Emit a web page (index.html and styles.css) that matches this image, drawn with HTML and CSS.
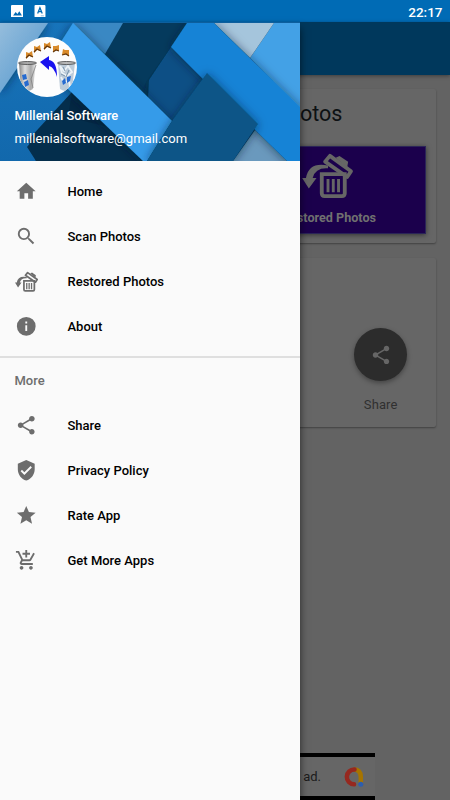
FILE: index.html
```html
<!DOCTYPE html>
<html lang="en">
<head>
<meta charset="utf-8">
<title>Millenial Software</title>
<link rel="stylesheet" href="styles.css">
</head>
<body>
<svg width="0" height="0" class="defs">
  <symbol id="restore" viewBox="0 0 54 48">
    <path d="M20.500 22h24v20q0 3-3 3h-18q-3 0-3-3z" fill="none" stroke="currentColor" stroke-width="4"/>
    <path d="M27 27v14M32.500 27v14M38 27v14" stroke="currentColor" stroke-width="3"/>
    <path d="M29 3l22 16-4 6L24 9z" fill="none" stroke="currentColor" stroke-width="4" stroke-linejoin="round"/>
    <path d="M35 5l4-2 9 6-1 6z" fill="currentColor"/>
    <path d="M27 13Q7 9 4 26H0l7 11 8-11h-4q3-11 16-10z" fill="currentColor"/>
  </symbol>
  <symbol id="share" viewBox="0 0 24 24">
    <path fill="currentColor" d="M18 16.080c-.76 0-1.440.3-1.960.77L8.910 12.700c.05-.23.09-.46.09-.7s-.04-.47-.09-.7l7.050-4.110c.54.5 1.250.81 2.040.81 1.660 0 3-1.340 3-3s-1.340-3-3-3-3 1.340-3 3c0 .24.04.47.09.7L8.040 9.810C7.500 9.310 6.790 9 6 9c-1.660 0-3 1.340-3 3s1.340 3 3 3c.79 0 1.500-.31 2.040-.81l7.120 4.160c-.05.21-.08.43-.08.65 0 1.610 1.310 2.920 2.920 2.920s2.920-1.310 2.920-2.920-1.310-2.920-2.920-2.920z"/>
  </symbol>
</svg>
<div class="phone">
  <header class="status">
    <svg class="st" viewBox="0 0 12 12"><rect width="12" height="12" rx="1" fill="#fff"/><path d="M2 10l2.500-3.200 1.600 1.800L8 6l2.500 4z" fill="#006bb5"/></svg>
    <svg class="st" viewBox="0 0 12 12"><rect x=".5" width="10.500" height="12" rx="1" fill="#fff"/><path d="M3.500 8.200L5.700 2.600 7.900 8.200M4.300 6.400h2.800" fill="none" stroke="#006bb5" stroke-width="1.200"/><path d="M6.500 10.400h3" stroke="#7fb3da" stroke-width=".8"/></svg>
    <span class="clock">22:17</span>
  </header>
  <div class="toolbar"></div>
  <main class="content">
    <section class="card photos">
      <h2>Photos</h2>
      <div class="tile"><svg class="tile-icon"><use href="#restore"/></svg><span>Restored Photos</span></div>
    </section>
    <section class="card actions">
      <div class="fab"><svg><use href="#share"/></svg></div>
      <span>Share</span>
    </section>
  </main>
  <footer class="ad">
    <span>ad.</span>
    <svg viewBox="0 0 20 20"><path d="M10 2.500Q17.300 2.500 17.300 10V16" fill="none" stroke="#a67400" stroke-width="4.500"/><path d="M11 2.500A7.300 7.300 0 0 0 10.500 17.300" fill="none" stroke="#96281f" stroke-width="4.500" stroke-linecap="round"/><circle cx="17.300" cy="17.300" r="2.500" fill="#2d5eaf"/></svg>
  </footer>

  <aside class="drawer">
    <div class="banner">
      <svg class="art" viewBox="0 0 300 138" preserveAspectRatio="none">
        <defs>
          <filter id="sh" x="-20%" y="-20%" width="140%" height="140%"><feDropShadow dx="0" dy="1" stdDeviation="5" flood-color="#001b33" flood-opacity=".6"/></filter>
          <linearGradient id="pale" x1="0" y1="0" x2="1" y2="1"><stop offset="0" stop-color="#95bddc"/><stop offset="1" stop-color="#4d94cd"/></linearGradient>
          <linearGradient id="mid" x1="0" y1="0" x2="0" y2="1"><stop offset="0" stop-color="#1774bb"/><stop offset="1" stop-color="#1268ac"/></linearGradient>
        </defs>
        <rect width="300" height="138" fill="#042f4e"/>
        <path d="M123 0h70l-43 76-46-45z" fill="#053a5d"/>
        <path d="M171 24l34 32-33 43-24-23 1-19z" fill="#0a5085" filter="url(#sh)"/>
        <path d="M123 0h66l-18 24-23 32-7 12-36-37z" fill="#053a5d"/>
        <path d="M70 0h53l-18 31z" fill="#3a88c3"/>
        <path d="M0 0h73L60 58l12 11-45 55 9 14H0z" fill="url(#mid)"/>
        <path d="M0 0h48L0 70z" fill="url(#pale)" filter="url(#sh)"/>
        <path d="M28 117l44-48 71 69H36z" fill="#042e4c"/>
        <path d="M72 69l36 35-40-10z" fill="#021f36" opacity=".4"/>
        <path d="M73 0l99 98-25 40h-4L45 44z" fill="#359be9" filter="url(#sh)"/>
        <path d="M274 0h26v86l-50-51z" fill="#43a1e6"/>
        <path d="M214 0h60l-24 35z" fill="#a5c5dc"/>
        <path d="M255 107l32 31h-54z" fill="#6a99bd"/>
        <path d="M187 0h27l86 84v54h-13l-84-82-32-32z" fill="#1583d6" filter="url(#sh)"/>
        <path d="M207 50l51 51-25 37h-86l25-40z" fill="#095487" filter="url(#sh)"/>
      </svg>
      <div class="who">
        <svg class="avatar" viewBox="0 0 60 60">
          <defs><clipPath id="av"><circle cx="30" cy="30" r="30"/></clipPath>
          <linearGradient id="tin"><stop offset="0" stop-color="#888"/><stop offset=".35" stop-color="#ddd"/><stop offset=".7" stop-color="#a8a8a8"/><stop offset="1" stop-color="#eee"/></linearGradient></defs>
          <circle cx="30" cy="30" r="30" fill="#fdfdfd"/>
          <g clip-path="url(#av)">
            <path d="M2 26h17l-3 26q-6 4-12 0z" fill="url(#tin)"/>
            <ellipse cx="10.500" cy="26" rx="9" ry="1.500" fill="#aaa" stroke="#444" stroke-width=".8"/>
            <path d="M19 28l-5 14 2 9" fill="none" stroke="#777" stroke-width=".7"/>
            <path d="M41 26h17l-3 26q-6 4-12 0z" fill="#bccbd9"/>
            <path d="M43 29l4 5 4-5 4 6-5 4-5-3zM44 40l3 6 5-3 1 7" fill="none" stroke="#edf3f7" stroke-width="1.800"/>
            <path d="M46 30l2 4m4-1l-3 7m-5-3l4 2" stroke="#7893ab" stroke-width="1"/>
            <ellipse cx="49.500" cy="26" rx="9" ry="1.500" fill="#bbb" stroke="#444" stroke-width=".8"/>
            <path d="M5 38l4-1 1 5-4 1zM7 45l4-2 1 5-4 2zM45 44l3-3 1 5-3 2zM50 40l4-1-1 5-3 2z" fill="#276bd0"/>
          </g>
          <path d="M23 25l9-6v4q8 1 8 17-3-10-8-11v4z" fill="#1912ef"/>
          <g fill="#d98b2c">
            <path d="M9 15l3 1 3-2 1 6-4-1-3 3zM17 9l3 1 3-2 1 6-4-1-3 3zM27 6l3 1 3-2 1 6-4-1-3 3zM36 9l3 0 3-1 0 6-3-1-3 2zM46 12l2 1 4 0 0 6-3-2-4 1z"/>
            <path d="M9 21l3-3 4 2M17 15l3-3 4 2M27 12l3-3 4 2M36 15l3-2 3 1M45 18l4-1 3 2" fill="none" stroke="#633508" stroke-width="1.200"/>
          </g>
        </svg>
        <strong>Millenial Software</strong>
        <span>millenialsoftware@gmail.com</span>
      </div>
    </div>
    <nav>
      <ul>
        <li><svg viewBox="0 0 24 24"><path d="M10 20v-6h4v6h5v-8h3L12 3 2 12h3v8z"/></svg>Home</li>
        <li><svg viewBox="0 0 24 24"><path d="M15.500 14h-.79l-.28-.27A6.470 6.470 0 0 0 16 9.500 6.500 6.500 0 1 0 9.500 16c1.610 0 3.090-.59 4.230-1.570l.27.28v.79l5 4.990L20.490 19l-4.990-5zm-6 0a4.500 4.500 0 1 1 0-9 4.500 4.500 0 0 1 0 9z"/></svg>Scan Photos</li>
        <li><svg class="bin"><use href="#restore"/></svg>Restored Photos</li>
        <li><svg viewBox="0 0 24 24"><path d="M12 2a10 10 0 1 0 0 20 10 10 0 0 0 0-20zm1 15h-2v-6h2v6zm0-8h-2V7h2v2z"/></svg>About</li>
      </ul>
      <h3>More</h3>
      <ul>
        <li><svg><use href="#share"/></svg>Share</li>
        <li><svg viewBox="0 0 24 24"><path d="M12 1L3 5v6c0 5.550 3.840 10.740 9 12 5.160-1.260 9-6.450 9-12V5l-9-4zm-2 16l-4-4 1.410-1.410L10 14.170l6.590-6.590L18 9l-8 8z"/></svg>Privacy Policy</li>
        <li><svg viewBox="0 0 24 24"><path d="M12 17.270L18.180 21l-1.640-7.030L22 9.240l-7.190-.61L12 2 9.190 8.630 2 9.240l5.460 4.730L5.820 21z"/></svg>Rate App</li>
        <li><svg viewBox="0 0 24 24"><path d="M11 9h2V6h3V4h-3V1h-2v3H8v2h3v3zm-4 9c-1.100 0-1.990.9-1.990 2S5.900 22 7 22s2-.9 2-2-.9-2-2-2zm10 0c-1.100 0-1.990.9-1.990 2s.89 2 1.990 2 2-.9 2-2-.9-2-2-2zm-9.830-3.250l.03-.12.9-1.630h7.450c.75 0 1.410-.41 1.750-1.030l3.860-7.010L19.420 4h-.01l-1.100 2-2.760 5H8.530l-.13-.27L6.160 6l-.95-2-.94-2H1v2h2l3.600 7.590-1.350 2.450c-.16.28-.25.61-.25.96 0 1.100.9 2 2 2h12v-2H7.420c-.13 0-.25-.11-.25-.25z"/></svg>Get More Apps</li>
      </ul>
    </nav>
  </aside>
</div>
</body>
</html>
```
FILE: styles.css
```css
* { box-sizing: border-box; margin: 0; padding: 0; }
body { font-family: Roboto, sans-serif; }
.defs { position: absolute; }
.phone {
  position: relative;
  width: 450px;
  height: 800px;
  overflow: hidden;
  display: flex;
  flex-direction: column;
  background: #636363;
}
.status {
  flex: none;
  display: flex;
  align-items: center;
  height: 22px;
  padding: 0 7.500px 0 10.500px;
  gap: 11px;
  background: #006bb5;
}
.st { width: 12.500px; height: 12.500px; }
.clock { margin-left: auto; color: #fff; font-size: 13.500px; font-weight: 500; line-height: 22px; padding-top: 1px; }
.toolbar { flex: none; height: 53px; background: #00385c; box-shadow: 0 1px 4px rgba(0,0,0,.4); }
.content { display: flex; flex-direction: column; gap: 15px; padding: 14px 14.500px 0 15px; }
.card { background: #666; border-radius: 2px; box-shadow: 0 1px 2px rgba(0,0,0,.35); }
.photos { height: 154px; padding: 11px 10px; }
.photos h2 { font-size: 21.500px; line-height: 28px; font-weight: 400; color: #0d1113; padding-left: 249.500px; }
.tile {
  width: 184px;
  height: 88px;
  margin: 17.500px 0 0 auto;
  display: flex;
  flex-direction: column;
  align-items: center;
  padding-top: 6px;
  gap: 10px;
  background: #1b004c;
  border: 1px solid #2b2458;
  box-shadow: 0 1px 5px rgba(0,0,0,.5);
  color: #666;
  font-size: 12.600px;
  line-height: 18px;
  font-weight: 700;
}
.tile-icon { width: 54px; height: 46px; margin-right: 11px; }
.tile span { color: #707070; margin-right: 9px; }
.actions { height: 169px; display: flex; flex-direction: column; align-items: flex-end; padding: 70px 28.500px 0; color: #303030; font-size: 13px; }
.actions span { margin: 15px 9.500px 0 0; line-height: 18px; letter-spacing: .1px; }
.fab { width: 53px; height: 53px; border-radius: 50%; background: #2c2c2c; color: #666; display: grid; place-items: center; box-shadow: 0 2px 5px rgba(0,0,0,.35); }
.fab svg { width: 22px; height: 22px; }
.ad {
  width: 375px;
  height: 47px;
  margin-top: auto;
  display: flex;
  align-items: center;
  justify-content: flex-end;
  gap: 22px;
  padding-right: 11px;
  background: #666;
  border-top: 4px solid #000;
  border-bottom: 4px solid #000;
  color: #1b1b1b;
  font-size: 13px;
}
.ad svg { width: 21px; height: 20px; }
.drawer {
  position: absolute;
  top: 22px;
  left: 0;
  width: 300px;
  height: 778px;
  background: #fafafa;
  box-shadow: 0 6px 8px rgba(0,0,0,.6);
}
.banner { display: grid; height: 139px; border-top: 1px solid #0d5f9e; overflow: hidden; }
.art, .who { grid-area: 1 / 1; }
.art { width: 300px; height: 138px; }
.who { position: relative; display: flex; flex-direction: column; padding: 14px 14.500px 0; color: #fff; font-size: 13.050px; line-height: 18px; }
.avatar { width: 60px; height: 60px; margin: 0 0 10px 2px; }
.who strong { font-weight: 500; font-size: 12.900px; }
.who span { margin-top: 5px; }
nav { padding-top: 8px; }
ul { list-style: none; }
li { display: flex; align-items: center; height: 45px; padding-left: 15px; gap: 30px; color: #000; font-size: 13px; font-weight: 500; }
li svg { width: 22.500px; height: 22.500px; color: #6d6d6d; fill: #6d6d6d; }
li .bin { width: 23.500px; height: 23.500px; margin-right: -1px; }
h3 { margin-top: 7px; height: 47px; padding: 14px 14.500px 0; border-top: 2px solid #dfdfdf; color: #6e6e6e; font-size: 13px; line-height: 18px; font-weight: 500; }
```
